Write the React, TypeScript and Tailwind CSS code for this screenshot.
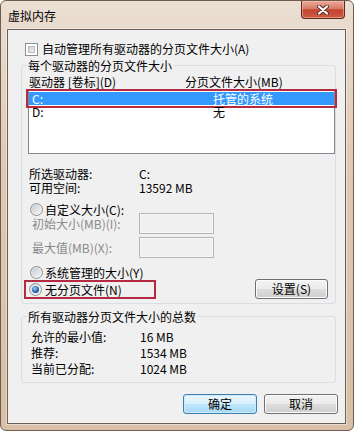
import React from 'react';

function Checkbox() {
  return (
    <div className="w-[13px] h-[13px] shrink-0 border border-[#8e8f8f] bg-white p-[2px]">
      <div className="w-full h-full border border-[#b9bcc0] bg-[linear-gradient(135deg,#cfd2d6_0%,#eef0f1_100%)]" />
    </div>
  );
}

function Radio({ checked = false }: { checked?: boolean }) {
  return (
    <div className="w-[13px] h-[13px] shrink-0 rounded-full border border-[#8e8f8f] bg-[linear-gradient(135deg,#d6d8db_0%,#fbfbfb_100%)] flex items-center justify-center">
      {checked ? (
        <div className="w-[7px] h-[7px] rounded-full bg-[radial-gradient(circle_at_40%_35%,#a9d0f5_0%,#2f6fbb_50%,#0b2a57_100%)]" />
      ) : (
        <div className="w-[9px] h-[9px] rounded-full bg-[linear-gradient(135deg,#c9ccd0_0%,#f3f4f5_100%)]" />
      )}
    </div>
  );
}

function Button({ children, primary = false, width }: { children: React.ReactNode; primary?: boolean; width: string }) {
  return (
    <button
      className={
        primary
          ? `${width} h-[20px] shrink-0 rounded-[3px] border border-[#3c7fb1] bg-[linear-gradient(180deg,#eaf6fd_0%,#d9f0fc_50%,#bee6fd_50%,#a7d9f5_100%)] shadow-[inset_0_0_0_1px_#cdeafb] leading-[18px] text-[12px] text-black`
          : `${width} h-[20px] shrink-0 rounded-[3px] border border-[#707070] bg-[linear-gradient(180deg,#f2f2f2_0%,#ebebeb_50%,#dddddd_50%,#cfcfcf_100%)] shadow-[inset_0_0_0_1px_#fcfcfc] leading-[18px] text-[12px] text-black`
      }
    >
      {children}
    </button>
  );
}

function DisabledInput() {
  return <div className="w-[75px] h-[21px] shrink-0 border border-[#b5b5b5] bg-[#f0f0f0] shadow-[inset_0_0_0_1px_#f7f7f7]" />;
}

export default function App() {
  return (
    <div className="w-[354px] h-[431px] flex flex-col overflow-hidden rounded-[6px] border border-[#6e5d4f] bg-[linear-gradient(180deg,#ebdfd3_0%,#e0cab5_35%,#d8bfa6_100%)] font-['Noto_Sans_CJK_SC','Liberation_Sans',sans-serif] text-[12px] text-black">
      {/* title bar */}
      <div className="h-[28px] shrink-0 flex items-start">
        <div className="ml-[7px] mt-[8px] leading-[14px]">虚拟内存</div>
        <button className="ml-auto mr-[8px] w-[44px] h-[18px] flex items-center justify-center rounded-b-[4px] border border-t-0 border-[#5a2a20] bg-[linear-gradient(180deg,#e9aa98_0%,#d67a68_45%,#c2432e_52%,#cf5c46_100%)] shadow-[inset_0_0_0_1px_rgba(255,200,180,0.5)]">
          <svg width="12" height="10" viewBox="0 0 12 10">
            <path d="M2 1.5 L10 8.5 M10 1.5 L2 8.5" stroke="#5a2a20" strokeWidth="4" strokeLinecap="round" />
            <path d="M2 1.5 L10 8.5 M10 1.5 L2 8.5" stroke="#ffffff" strokeWidth="2.2" strokeLinecap="round" />
          </svg>
        </button>
      </div>

      {/* client area */}
      <div className="ml-[6px] w-[339px] h-[395px] shrink-0 flex flex-col border border-[#6b5f55] bg-[#f0f0f0] shadow-[0_0_0_1px_rgba(255,255,255,0.45)]">
        <div className="mt-[12px] ml-[17px] h-[14px] flex items-center">
          <Checkbox />
          <span className="ml-[4px] leading-[14px]">自动管理所有驱动器的分页文件大小(A)</span>
        </div>

        {/* per-drive group */}
        <div className="ml-[13px] mt-[9px] w-[315px] h-[239px] shrink-0 flex flex-col rounded-[3px] border border-[#d5dfe5]">
          <div className="-mt-[7px] ml-[5px] px-[1px] w-fit bg-[#f0f0f0] leading-[13px]">每个驱动器的分页文件大小</div>
          <div className="mt-[3px] flex leading-[13px]">
            <span className="ml-[7px] w-[156px]">驱动器 [卷标](D)</span>
            <span>分页文件大小(MB)</span>
          </div>
          <div className="mt-[2px] ml-[6px] w-[307px] h-[64px] shrink-0 flex flex-col border border-[#828790] bg-white">
            <div className="mt-[1px] h-[13px] flex leading-[13px] bg-[#3399ff] text-white outline-2 outline-[#b52a40] outline-offset-[1px]">
              <span className="pl-[3px] w-[184px]">C:</span>
              <span>托管的系统</span>
            </div>
            <div className="h-[13px] flex leading-[13px]">
              <span className="pl-[3px] w-[184px]">D:</span>
              <span>无</span>
            </div>
          </div>

          <div className="mt-[13px] ml-[7px] flex flex-col leading-[14px]">
            <div className="flex">
              <span className="w-[110px]">所选驱动器:</span>
              <span>C:</span>
            </div>
            <div className="flex">
              <span className="w-[110px]">可用空间:</span>
              <span>13592 MB</span>
            </div>
          </div>

          <div className="mt-[8px] ml-[8px] h-[13px] flex items-center">
            <Radio />
            <span className="ml-[2px] leading-[13px]">自定义大小(C):</span>
          </div>
          <div className="-mt-[3px] ml-[10px] h-[21px] flex items-center text-[#8a8a8a]">
            <span className="w-[107px] leading-[13px]">初始大小(MB)(I):</span>
            <DisabledInput />
          </div>
          <div className="mt-[3px] ml-[10px] h-[21px] flex items-center text-[#8a8a8a]">
            <span className="w-[107px] leading-[13px]">最大值(MB)(X):</span>
            <DisabledInput />
          </div>

          <div className="mt-[8px] ml-[8px] h-[13px] flex items-center">
            <Radio />
            <span className="ml-[2px] leading-[13px]">系统管理的大小(Y)</span>
          </div>
          <div className="h-[20px] flex items-center">
            <div className="ml-[2px] w-[132px] h-[19px] pl-[3px] flex items-center border-2 border-[#b52a40]">
              <Radio checked />
              <span className="ml-[3px] leading-[13px]">无分页文件(N)</span>
            </div>
            <div className="ml-auto mr-[7px]">
              <Button width="w-[73px]">设置(S)</Button>
            </div>
          </div>
        </div>

        {/* totals group */}
        <div className="ml-[13px] mt-[12px] w-[315px] h-[67px] shrink-0 flex flex-col rounded-[3px] border border-[#d5dfe5]">
          <div className="-mt-[7px] ml-[5px] px-[1px] w-fit bg-[#f0f0f0] leading-[13px]">所有驱动器分页文件大小的总数</div>
          <div className="mt-[6px] ml-[9px] flex flex-col">
            <div className="h-[16px] flex items-center">
              <span className="w-[109px]">允许的最小值:</span>
              <span>16 MB</span>
            </div>
            <div className="h-[16px] flex items-center">
              <span className="w-[109px]">推荐:</span>
              <span>1534 MB</span>
            </div>
            <div className="h-[16px] flex items-center">
              <span className="w-[109px]">当前已分配:</span>
              <span>1024 MB</span>
            </div>
          </div>
        </div>

        <div className="mt-[11px] pr-[7px] flex justify-end gap-[7px]">
          <Button primary width="w-[74px]">确定</Button>
          <Button width="w-[74px]">取消</Button>
        </div>
      </div>
    </div>
  );
}
